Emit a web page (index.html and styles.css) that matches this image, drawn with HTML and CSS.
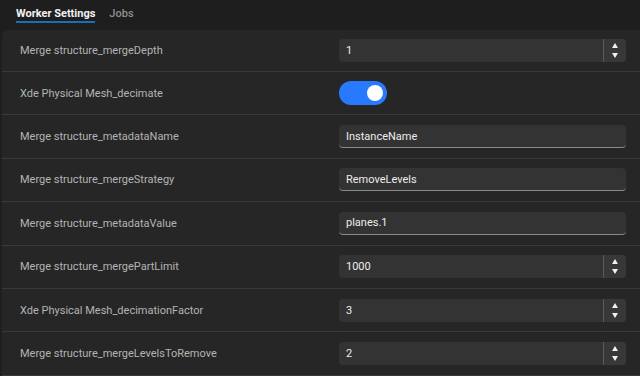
FILE: index.html
```html
<!DOCTYPE html>
<html>
<head>
<meta charset="utf-8">
<link rel="stylesheet" href="styles.css">
</head>
<body>
<div class="tabs">
  <div class="tab active">Worker Settings</div>
  <div class="tab">Jobs</div>
</div>
<div class="panel">
  <div class="row first">
    <div class="label">Merge structure_mergeDepth</div>
    <div class="field"><div class="input num"><span class="val">1</span><div class="stepper"><span class="up"></span><span class="down"></span></div></div></div>
  </div>
  <div class="row">
    <div class="label">Xde Physical Mesh_decimate</div>
    <div class="field"><div class="toggle"><span class="knob"></span></div></div>
  </div>
  <div class="row">
    <div class="label">Merge structure_metadataName</div>
    <div class="field"><div class="input text"><span class="val">InstanceName</span></div></div>
  </div>
  <div class="row">
    <div class="label">Merge structure_mergeStrategy</div>
    <div class="field"><div class="input text"><span class="val">RemoveLevels</span></div></div>
  </div>
  <div class="row">
    <div class="label">Merge structure_metadataValue</div>
    <div class="field"><div class="input text"><span class="val">planes.1</span></div></div>
  </div>
  <div class="row">
    <div class="label">Merge structure_mergePartLimit</div>
    <div class="field"><div class="input num"><span class="val">1000</span><div class="stepper"><span class="up"></span><span class="down"></span></div></div></div>
  </div>
  <div class="row">
    <div class="label">Xde Physical Mesh_decimationFactor</div>
    <div class="field"><div class="input num"><span class="val">3</span><div class="stepper"><span class="up"></span><span class="down"></span></div></div></div>
  </div>
  <div class="row">
    <div class="label">Merge structure_mergeLevelsToRemove</div>
    <div class="field"><div class="input num"><span class="val">2</span><div class="stepper"><span class="up"></span><span class="down"></span></div></div></div>
  </div>
</div>
</body>
</html>
```

FILE: styles.css
```css
html, body {
  margin: 0;
  padding: 0;
  background: #1e1e1e;
  font-family: Roboto, "Liberation Sans", sans-serif;
  font-size: 11px;
  overflow: hidden;
  height: 376px;
}
.tabs {
  display: flex;
  gap: 14px;
  padding: 0 0 0 16px;
  height: 30px;
}
.tab {
  color: #8f8f8f;
  font-size: 11px;
  font-weight: 500;
  padding-top: 7px;
  height: 24px;
  box-sizing: border-box;
  line-height: 13px;
}
.tab.active {
  color: #f2f2f2;
  font-weight: 700;
  border-bottom: 2px solid #1a6fb8;
  height: 23px;
}
.panel {
  margin-left: 2px;
  background: #262626;
  border-top-left-radius: 6px;
  height: 346px;
}
.row {
  display: flex;
  align-items: center;
  height: 43.4px;
  box-sizing: border-box;
  border-bottom: 1px solid #3a3a3a;
}
.row.first {
  height: 42px;
}
.label {
  width: 337px;
  padding-left: 18px;
  box-sizing: border-box;
  color: #b4b4b4;
}
.field {
  flex: 1;
  padding-right: 14px;
}
.input {
  height: 23px;
  background: #333333;
  border-radius: 4px;
  display: flex;
  align-items: center;
  color: #ededed;
  box-sizing: border-box;
}
.input .val {
  flex: 1;
  padding-left: 7px;
}
.input.text {
  border-bottom: 1px solid #8a8a8a;
}
.stepper {
  width: 22px;
  height: 23px;
  border-left: 1px solid #5a5a5a;
  background: #383838;
  border-radius: 0 4px 4px 0;
  display: flex;
  flex-direction: column;
  align-items: center;
  justify-content: center;
  gap: 5px;
}
.up {
  width: 0;
  height: 0;
  border-left: 3.5px solid transparent;
  border-right: 3.5px solid transparent;
  border-bottom: 5px solid #f0f0f0;
}
.down {
  width: 0;
  height: 0;
  border-left: 3.5px solid transparent;
  border-right: 3.5px solid transparent;
  border-top: 5px solid #f0f0f0;
}
.toggle {
  width: 48px;
  height: 24px;
  border-radius: 12px;
  background: #2979ff;
  display: flex;
  align-items: center;
  justify-content: flex-end;
  padding-right: 4px;
  box-sizing: border-box;
}
.knob {
  width: 16px;
  height: 16px;
  border-radius: 50%;
  background: #ffffff;
}
```
